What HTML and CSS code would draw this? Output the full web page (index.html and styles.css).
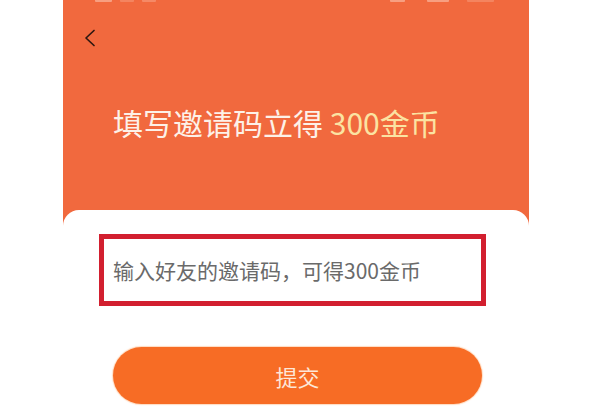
FILE: index.html
```html
<!DOCTYPE html>
<html lang="zh-CN">
<head>
<meta charset="utf-8">
<title>填写邀请码</title>
<link rel="stylesheet" href="styles.css">
</head>
<body>
<div class="screen">
  <header class="hero">
    <div class="status">
      <div class="status-left">
        <span class="sb sb-a"></span>
        <span class="sb sb-b"></span>
        <span class="sb sb-c"></span>
      </div>
      <div class="status-right">
        <span class="sb sb-d"></span>
        <span class="sb sb-e"></span>
        <span class="sb sb-f"></span>
      </div>
    </div>
    <div class="nav">
      <svg class="back" width="14" height="18" viewBox="0 0 14 18" aria-label="返回">
        <path d="M11 1.5 L3 9 L11 16.5" fill="none" stroke="#2e1710" stroke-width="1.7" stroke-linecap="round" stroke-linejoin="round"/>
      </svg>
    </div>
    <h1 class="title">填写邀请码立得 <span class="reward">300金币</span></h1>
  </header>
  <main class="card">
    <div class="code-box">
      <input class="code-input" type="text" placeholder="输入好友的邀请码，可得300金币">
    </div>
    <button class="submit" type="button">提交</button>
  </main>
</div>
</body>
</html>
```

FILE: styles.css
```css
html, body {
  margin: 0;
  padding: 0;
  background: #ffffff;
}

body {
  width: 600px;
  height: 420px;
  overflow: hidden;
  font-family: "Noto Sans CJK SC", "Noto Sans", sans-serif;
}

.screen {
  margin-left: 63px;
  width: 466px;
  height: 420px;
  background: #f1693e;
  display: flex;
  flex-direction: column;
}

.hero {
  height: 210px;
  display: flex;
  flex-direction: column;
  flex-shrink: 0;
}

.status {
  height: 4px;
  display: flex;
  justify-content: space-between;
  padding: 0 35px 0 32px;
}

.status-left,
.status-right {
  display: flex;
  gap: 8px;
  align-items: flex-start;
}

.sb {
  display: block;
  height: 2px;
  background: rgba(255, 226, 210, 0.45);
  border-radius: 0 0 1px 1px;
}

.sb-a { width: 17px; }
.sb-b { width: 14px; opacity: 0.5; }
.sb-c { width: 14px; opacity: 0.6; }
.sb-d { width: 15px; }
.sb-e { width: 22px; margin-left: 14px; }
.sb-f { width: 27px; margin-left: 10px; opacity: 0.5; }

.nav {
  margin-top: 25px;
  height: 18px;
  padding-left: 20px;
  display: flex;
  align-items: center;
}

.back {
  display: block;
}

.title {
  margin: 60px 0 0 50px;
  font-size: 30px;
  line-height: 30px;
  font-weight: 400;
  color: #fdf1e8;
  white-space: nowrap;
}

.reward {
  color: #fbe3a2;
}

.card {
  flex: 1;
  background: #ffffff;
  border-radius: 16px 16px 0 0;
  padding-top: 24px;
  display: flex;
  flex-direction: column;
}

.code-box {
  margin-left: 36px;
  width: 387px;
  height: 72px;
  box-sizing: border-box;
  border: 5px solid #d21f2f;
  background: #ffffff;
  display: flex;
  align-items: center;
  padding-left: 9px;
}

.code-input {
  width: 100%;
  border: none;
  outline: none;
  background: transparent;
  padding: 0;
  font-family: "Noto Sans CJK SC", "Noto Sans", sans-serif;
  font-size: 21px;
  line-height: 28px;
  color: #555555;
}

.code-input::placeholder {
  color: #6a6a6a;
  opacity: 1;
}

.submit {
  margin: 41px 0 0 50px;
  width: 369px;
  height: 57px;
  border: none;
  border-radius: 29px;
  background: #f76c25;
  box-shadow: 0 0 1px 1px rgba(255, 190, 140, 0.55);
  color: #fde7d8;
  font-family: "Noto Sans CJK SC", "Noto Sans", sans-serif;
  font-size: 22px;
  padding: 0;
  cursor: pointer;
}
```
